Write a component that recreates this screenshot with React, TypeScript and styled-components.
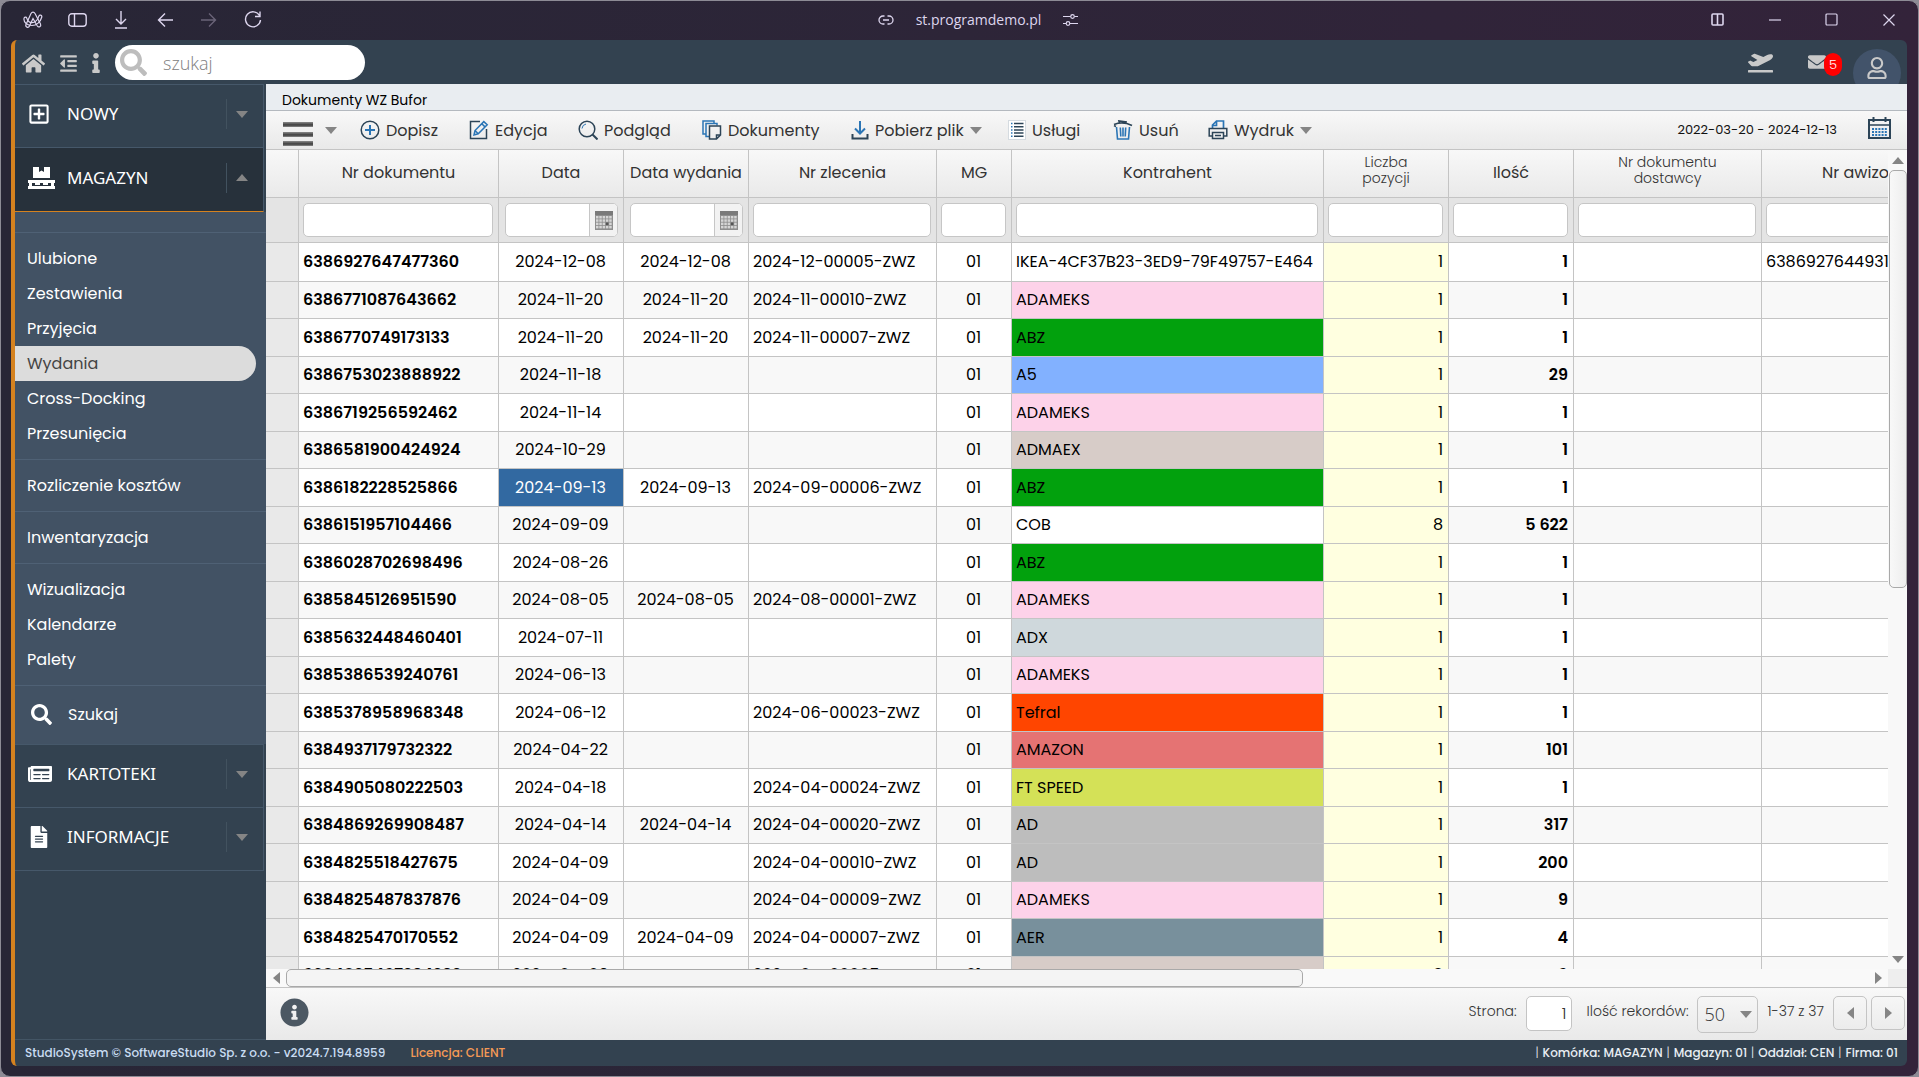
import React from "react";
import styled, { createGlobalStyle, css } from "styled-components";
import { FaHome, FaOutdent, FaInfo, FaInfoCircle, FaSearch, FaPlaneDeparture, FaEnvelope, FaRegUser, FaRegPlusSquare, FaNewspaper, FaFileAlt } from "react-icons/fa";

const UI = `Poppins, Inter, "Open Sans", sans-serif`;
const MENU = `"Noto Sans", "Open Sans", sans-serif`;
const SEGOE = `"Open Sans", "Noto Sans", sans-serif`;
const NAVY = "#2c4457";
const BLUE = "#2b75b5";
const LINE = "#c4c4c4";

const Global = createGlobalStyle`
  *, *::before, *::after { box-sizing: border-box; }
  html, body, #root { height: 100%; }
  body { margin: 0; overflow: hidden; background: #8d8b95; font-family: ${UI}; }
  button, input, select { font: inherit; color: inherit; }
  button { border: 0; padding: 0; background: none; cursor: pointer; }
  svg { display: block; flex: none; }
`;

const Window = styled.div`
  height: 100vh;
  padding: 0 11px 10px 10px;
  display: flex;
  flex-direction: column;
  border: 1px solid #8d8b95;
  border-radius: 10px;
  background: linear-gradient(to right, #282636, #2d2538 50%, #33233a);
`;

const TitleBar = styled.header`
  height: 39px;
  flex: none;
  display: flex;
  align-items: center;
  padding-bottom: 2px;
  color: #ddd6ee;
`;

const TitleGroup = styled.div<{ $end?: boolean }>`
  flex: ${p => (p.$end ? "1 1 0" : "1 1 50px")};
  display: flex;
  align-items: center;
  gap: ${p => (p.$end ? 44 : 0)}px;
  padding-right: ${p => (p.$end ? 12 : 0)}px;
  justify-content: ${p => (p.$end ? "flex-end" : "flex-start")};
`;

const TitleButton = styled.button<{ $w?: number }>`
  width: ${p => p.$w || 44}px;
  display: flex;
  justify-content: center;
`;

const Address = styled.div`
  display: flex;
  align-items: center;
  gap: 22px;
  font: 14px/20px ${SEGOE};
`;

const Shell = styled.div`
  flex: 1;
  min-height: 0;
  display: flex;
  flex-direction: column;
  overflow: hidden;
  border-left: 4px solid #d5821f;
  border-radius: 6px;
  background: #334250;
`;

const TopBar = styled.div`
  height: 44px;
  flex: none;
  display: flex;
  align-items: center;
  padding-left: 7px;
  color: #c9c9c9;
  overflow: hidden;
`;

const TopButton = styled.button<{ $w: number }>`
  width: ${p => p.$w}px;
  display: flex;
  margin-top: 2px;
`;

const Search = styled.label`
  width: 250px;
  height: 35px;
  padding: 0 5px;
  display: flex;
  align-items: center;
  gap: 16px;
  border-radius: 18px;
  background: #fff;
  color: #bdbdbd;
`;

const SearchInput = styled.input`
  flex: 1;
  min-width: 0;
  border: 0;
  outline: 0;
  padding: 2px 0 0;
  background: transparent;
  font: 300 18px/28px ${SEGOE};
  color: #444;
  &::placeholder { color: #808080; opacity: 1; }
`;

const TopRight = styled.div`
  margin-left: auto;
  display: flex;
  align-items: center;
`;

const Mail = styled.button`
  width: 60px;
  margin-left: 35px;
  display: flex;
  align-items: center;
`;

const Badge = styled.span`
  width: 18px;
  height: 23px;
  margin: 4px 0 0 -2px;
  border-radius: 9px;
  background: #f00;
  color: #fff;
  font-weight: 300;
  font-size: 13px;
  line-height: 24px;
`;

const Avatar = styled.button`
  width: 48px;
  height: 48px;
  margin: 22px 6px 0 -15px;
  padding-top: 8px;
  display: flex;
  align-items: flex-start;
  justify-content: center;
  border-radius: 24px;
  background: #42536a;
`;

const Body = styled.div`
  flex: 1;
  min-height: 0;
  display: flex;
`;

const Sidebar = styled.nav`
  width: 251px;
  flex: none;
  border-bottom: 1px solid #435565;
`;

const Section = styled.button<{ $open?: boolean }>`
  width: 249px;
  height: 63px;
  display: flex;
  align-items: center;
  padding: 0 15px 4px 13px;
  border: 0 solid #46586a;
  border-width: 1px 1px 0 0;
  color: #fff;
  font: 17px/24px ${MENU};
  text-align: left;
  ${p => p.$open && css`
    height: 65px;
    background: #27313b;
    border-bottom: 1px solid #d5821f;
  `}
`;

const SectionIcon = styled.span`
  width: 39px;
  display: flex;
`;

const SectionArrow = styled.span`
  margin-left: auto;
  height: 30px;
  padding-left: 9px;
  display: flex;
  align-items: center;
  border-left: 1px solid #42525f;
`;

const Submenu = styled.div`
  padding-top: 20px;
  background: #425264;
`;

const Group = styled.div`
  padding: 8px 0;
  border-top: 1px solid #4f6175;
`;

const MenuLink = styled.a<{ $active?: boolean }>`
  display: block;
  width: 241px;
  padding-left: 12px;
  font-size: 16px;
  line-height: 35px;
  color: #fff;
  text-decoration: none;
  border-radius: 0 18px 18px 0;
  ${p => p.$active && css`
    background: #dcdcdc;
    color: #444;
  `}
`;

const SearchLink = styled.a`
  display: flex;
  align-items: center;
  gap: 16px;
  height: 59px;
  padding: 0 0 2px 16px;
  border-top: 1px solid #4f6175;
  font-size: 16px;
  color: #fff;
  text-decoration: none;
`;

const SidebarEnd = styled.div`
  width: 249px;
  border-top: 1px solid #46586a;
`;

const Main = styled.main`
  flex: 1;
  min-width: 0;
  display: flex;
  flex-direction: column;
  background: #f7f7f7;
  color: #333;
`;

const PageTitle = styled.h1`
  margin: 0;
  height: 27px;
  flex: none;
  padding-left: 16px;
  border-bottom: 1px solid #b4b9bf;
  background: #e9edf1;
  color: #000;
  font-size: 14px;
  font-weight: 400;
  line-height: 32px;
`;

const Toolbar = styled.div`
  height: 39px;
  flex: none;
  display: flex;
  align-items: center;
  padding: 0 16px 0 17px;
  border-bottom: 1px solid ${LINE};
  background: linear-gradient(#f8f8f8, #e9e9e9);
  font-size: 16px;
`;

const ToolButton = styled.button<{ $w: number }>`
  width: ${p => p.$w}px;
  display: flex;
  align-items: center;
  gap: 6px;
  white-space: nowrap;
`;

const Burger = styled.span`
  width: 30px;
  height: 24px;
  margin: 8px 6px 0 0;
  display: flex;
  flex-direction: column;
  justify-content: space-between;
  &::before, &::after, & > i {
    content: "";
    height: 5px;
    background: linear-gradient(#8a8a8a, #3c3c3c 60%, #8a8a8a);
  }
`;

const DateRange = styled.span`
  margin-left: auto;
  padding-right: 31px;
  color: #111;
  font-size: 13px;
`;

const DateButton = styled.button`
  padding-bottom: 4px;
`;

const GridArea = styled.div`
  flex: 1;
  min-height: 0;
  display: flex;
`;

const Viewport = styled.div`
  flex: 1;
  min-width: 0;
  overflow: hidden;
`;

const Table = styled.table`
  width: 1684px;
  table-layout: fixed;
  border-collapse: separate;
  border-spacing: 0;
  font-size: 16px;
  color: #000;
  th, td { padding: 0; border: 0 solid ${LINE}; border-width: 0 1px 1px 0; white-space: nowrap; overflow: hidden; }
`;

const HeadRow = styled.tr`
  height: 48px;
  background: linear-gradient(#f8f8f8, #e9e9e9);
`;

const HeadCell = styled.th<{ $small?: boolean }>`
  && { white-space: normal; padding-bottom: ${p => (p.$small ? 8 : 2)}px; }
  color: #333;
  font-weight: ${p => (p.$small ? 300 : 400)};
  font-size: ${p => (p.$small ? 14 : 16)}px;
  line-height: 16px;
`;

const FilterRow = styled.tr`
  height: 45px;
  background: #e4e4e4;
`;

const FilterCell = styled.td`
  && { padding: 0 5px 0 4px; }
`;

const FilterBox = styled.div<{ $date?: boolean }>`
  height: 34px;
  margin-left: ${p => (p.$date ? 2 : 0)}px;
  display: flex;
  border: 1px solid #c6c6c6;
  border-radius: 5px;
  background: #fff;
  overflow: hidden;
`;

const FilterInput = styled.input`
  flex: 1;
  width: 0;
  border: 0;
  outline: 0;
  padding: 0 4px;
  background: transparent;
`;

const FilterButton = styled.button`
  width: 28px;
  display: flex;
  align-items: center;
  justify-content: center;
  border-left: 1px solid #c6c6c6;
  background: #f2f2f2;
`;

const Row = styled.tr`
  height: 38px;
  background: #fff;
  &:nth-child(even) { height: 37px; background: #f8f8f8; }
  &:first-child { height: 39px; }
`;

const Cell = styled.td<{ $align?: string; $bold?: boolean; $bg?: string; $selected?: boolean }>`
  && { padding: 0 5px 0 4px; }
  text-align: ${p => p.$align || "left"};
  font-weight: ${p => (p.$bold ? 600 : 400)};
  line-height: 24px;
  ${p => p.$bg && css`background: ${p.$bg};`}
  ${p => p.$selected && css`background: #3269a1; color: #fff;`}
`;

const VScroll = styled.div`
  width: 19px;
  flex: none;
  display: flex;
  flex-direction: column;
  align-items: center;
  background: #f8f8f8;
`;

const VThumb = styled.div`
  flex: 0 0 51%;
  width: 18px;
  border: 1px solid #a9a9a9;
  border-radius: 5px;
  background: linear-gradient(to right, #f8f8f8, #ededed);
`;

const VSlot = styled.span<{ $end?: boolean }>`
  margin-top: ${p => (p.$end ? "auto" : 0)};
  height: 20px;
  display: flex;
  align-items: center;
`;

const HScroll = styled.div`
  height: 19px;
  flex: none;
  display: flex;
  align-items: center;
  background: #f9f9f9;
  border-bottom: 1px solid ${LINE};
`;

const HThumb = styled.div`
  flex: 0 0 62%;
  height: 18px;
  border: 1px solid #a9a9a9;
  border-radius: 5px;
  background: #f4f4f4;
`;

const HSlot = styled.span<{ $end?: boolean }>`
  width: 20px;
  margin-left: ${p => (p.$end ? "auto" : 0)};
  display: flex;
  justify-content: center;
`;

const Corner = styled.span`
  width: 19px;
  height: 18px;
  background: #eee;
`;

const Pager = styled.div`
  height: 52px;
  flex: none;
  display: flex;
  align-items: flex-start;
  padding: 8px 2px 0 14px;
  background: linear-gradient(#f8f8f8, #e9e9e9);
  font-weight: 300;
  font-size: 14px;
  line-height: 30px;
`;

const InfoButton = styled.button`
  margin: 2px auto 0 0;
  color: #4c5863;
`;

const PageLabel = styled.label`
  display: flex;
  gap: 9px;
  margin-right: 15px;
`;

const PageInput = styled.input`
  width: 46px;
  height: 35px;
  padding: 0 4px;
  border: 1px solid ${LINE};
  border-radius: 5px;
  background: #fff;
  text-align: right;
  font-size: 16px;
`;

const SizeLabel = styled(PageLabel)`
  margin-right: 9px;
`;

const SelectWrap = styled.span`
  width: 61px;
  height: 37px;
  display: flex;
  align-items: center;
  padding-right: 5px;
  border: 1px solid ${LINE};
  border-radius: 5px;
  background: linear-gradient(#f6f6f6, #eaeaea);
`;

const PageSelect = styled.select`
  appearance: none;
  flex: 1;
  width: 0;
  border: 0;
  outline: 0;
  padding: 0 0 2px 6px;
  background: transparent;
  font: 300 18px/30px ${SEGOE};
`;

const PageButton = styled.button`
  width: 34px;
  height: 34px;
  margin-left: 4px;
  display: flex;
  align-items: center;
  justify-content: center;
  border: 1px solid ${LINE};
  border-radius: 5px;
  background: linear-gradient(#f6f6f6, #ececec);
`;

const Range = styled.span`
  margin-right: 5px;
`;

const StatusBar = styled.footer`
  height: 26px;
  flex: none;
  display: flex;
  align-items: center;
  padding: 0 9px 0 10px;
  color: #c9dcf2;
  font-weight: 500;
  font-size: 12px;
`;

const License = styled.span`
  margin-left: 25px;
  color: #f59a56;
`;

const Context = styled.span`
  margin-left: auto;
  display: flex;
  gap: 4px;
  color: #e9eef4;
  i { font-style: normal; font-weight: 300; }
`;

const Tri = ({ dir = "down", w = 12, color = "#858585" }: { dir?: string; w?: number; color?: string }) => {
  const h = Math.round(w * 0.58);
  const pts: Record<string, string> = {
    down: `0,0 ${w},0 ${w / 2},${h}`,
    up: `0,${h} ${w},${h} ${w / 2},0`,
    left: `${h},0 ${h},${w} 0,${w / 2}`,
    right: `0,0 0,${w} ${h},${w / 2}`,
  };
  const flat = dir === "down" || dir === "up";
  return <svg width={flat ? w : h} height={flat ? h : w} fill={color} aria-hidden="true"><polygon points={pts[dir]} /></svg>;
};

const Draw = ({ w = 20, h = 20, sw = 1.5, children }: { w?: number; h?: number; sw?: number; children: React.ReactNode }) => (
  <svg width={w} height={h} viewBox={`0 0 ${w} ${h}`} fill="none" stroke="currentColor" strokeWidth={sw} aria-hidden="true">{children}</svg>
);

const ToolIcon = ({ name }: { name: string }) => {
  switch (name) {
    case "add":
      return <Draw><circle cx="10" cy="10" r="8.8" stroke={NAVY} /><path d="M10 5v10M5 10h10" stroke={BLUE} strokeWidth="2" /></Draw>;
    case "edit":
      return <Draw><path d="M11 1.5H1.5v17h16V9" stroke={NAVY} /><path d="M5 15l1-4.5L14.8 1.6l3.4 3.2-9 9zM6 10.5l3.2 3.3M12.8 3.7l3.2 3.2" stroke={BLUE} /></Draw>;
    case "view":
      return <Draw><circle cx="9" cy="9" r="7.8" stroke={NAVY} /><path d="M14.5 14.5l5 5" stroke={NAVY} strokeWidth="2" /><path d="M4 8.5A5 5 0 0 1 8 4" stroke={BLUE} strokeWidth="1" /></Draw>;
    case "docs":
      return <Draw><path d="M4 14H1V1h11v2M7 16.5H4v-13h11v2" stroke={BLUE} /><path d="M7.5 6h11v9l-4 4h-7zM18.500 15h-4v4" stroke={NAVY} /></Draw>;
    case "download":
      return <Draw w={18}><path d="M9 1v12.5M4 8.5l5 5 5-5" stroke={BLUE} strokeWidth="2" /><path d="M1.5 14v4.5h15V14" stroke={NAVY} strokeWidth="2" /></Draw>;
    case "list":
      return <Draw w={18}><rect x=".5" y=".5" width="17" height="19" fill="#fff" stroke="#d5dbe0" strokeWidth="1" /><path d="M3 3.5h1.5M3 6.7h1.5M3 9.9h1.5M3 13.1h1.5M3 16.3h1.5" stroke={BLUE} /><path d="M6 3.5h9.5M6 6.7h9.5M6 9.9h9.5M6 13.1h9.5M6 16.3h9.5" stroke={NAVY} /></Draw>;
    case "trash":
      return <Draw><path d="M1 4.5c5-2 12-2 18 1M6.5 3L6 1l7 1-.5 1.500M3 6.500l-2-1" stroke={NAVY} strokeWidth="1.7" /><path d="M3.500 7l1 12h11l1-12M7.3 7.5l.5 9M10 7.500v9M12.7 7.5l-.5 9" stroke={BLUE} strokeWidth="1.6" /></Draw>;
    case "print":
      return <Draw><path d="M4.500 8.500V5l4-4h7v7.500M4.500 5.500h4V1" stroke={BLUE} strokeWidth="1.7" /><path d="M4.500 16H1.2V8.500h17.6V16h-3.3M4.500 12.500h11v6h-11zM7 15.500h6" stroke={NAVY} /></Draw>;
    default:
      return null;
  }
};

const PalletIcon = () => (
  <svg width="28" height="22" viewBox="0 0 28 22" fill="#fff" aria-hidden="true">
    <path d="M5 0h6v5l2.5-1.5L16 5V0h6v11H5z" /><path d="M0 13h27v3H0zM0 19h27v3H0z" /><path d="M1 16h3v3H1zM7 16h5v2H7zM15 16h5v2h-5zM23 16h3v3h-3z" />
  </svg>
);

const FilterCalendar = () => (
  <svg width="18" height="19" aria-hidden="true">
    <rect width="18" height="19" fill="#8e8e8e" /><rect width="18" height="4" fill="#7a7a7a" />
    {[0, 1, 2, 3].map(r => [0, 1, 2, 3, 4].map(c => <rect key={`${r}${c}`} x={1 + c * 3.3} y={5 + r * 3.3} width="2.5" height="2.5" fill={r === 2 && c === 3 ? "#555" : "#d6d6d6"} />))}
  </svg>
);

const CalendarIcon = () => (
  <Draw w={23} h={22} sw={2}>
    <path d="M1 3h21v18H1zM5.5 0v5M17.5 0v5" stroke={NAVY} /><path d="M2 8h19" stroke={NAVY} strokeWidth="1.5" />
    <path d="M4 12h15M4 15h15M4 18h15" stroke={BLUE} strokeDasharray="2 1.2" />
  </Draw>
);

const tools = [
  { id: "add", label: "Dopisz", w: 109 },
  { id: "edit", label: "Edycja", w: 109 },
  { id: "view", label: "Podgląd", w: 124 },
  { id: "docs", label: "Dokumenty", w: 149 },
  { id: "download", label: "Pobierz plik", w: 157, arrow: true },
  { id: "list", label: "Usługi", w: 105 },
  { id: "trash", label: "Usuń", w: 95 },
  { id: "print", label: "Wydruk", w: 110, arrow: true },
];

const columns = [
  { label: "", w: 33 },
  { label: "Nr dokumentu", w: 200 },
  { label: "Data", w: 125, date: true },
  { label: "Data wydania", w: 125, date: true },
  { label: "Nr zlecenia", w: 188 },
  { label: "MG", w: 75 },
  { label: "Kontrahent", w: 312 },
  { label: "Liczba pozycji", w: 125, small: true, lines: ["Liczba", "pozycji"] },
  { label: "Ilość", w: 125 },
  { label: "Nr dokumentu dostawcy", w: 188, small: true, lines: ["Nr dokumentu", "dostawcy"] },
  { label: "Nr awizo", w: 188 },
];

const colors: Record<string, string> = {
  ADAMEKS: "#fdd2e9", ABZ: "#02a10d", A5: "#82b1ff", ADMAEX: "#d7ccc8", COB: "#fff", ADX: "#cfd8dc",
  Tefral: "#ff4500", AMAZON: "#e57373", "FT SPEED": "#d4e157", AD: "#bdbdbd", AER: "#78909c",
};

// number, date, issue date, order, client, positions, quantity, notice
const rows: string[][] = [
  ["6386927647477360", "2024-12-08", "2024-12-08", "2024-12-00005-ZWZ", "IKEA-4CF37B23-3ED9-79F49757-E464", "1", "1", "6386927644931"],
  ["6386771087643662", "2024-11-20", "2024-11-20", "2024-11-00010-ZWZ", "ADAMEKS", "1", "1"],
  ["6386770749173133", "2024-11-20", "2024-11-20", "2024-11-00007-ZWZ", "ABZ", "1", "1"],
  ["6386753023888922", "2024-11-18", "", "", "A5", "1", "29"],
  ["6386719256592462", "2024-11-14", "", "", "ADAMEKS", "1", "1"],
  ["6386581900424924", "2024-10-29", "", "", "ADMAEX", "1", "1"],
  ["6386182228525866", "2024-09-13", "2024-09-13", "2024-09-00006-ZWZ", "ABZ", "1", "1"],
  ["6386151957104466", "2024-09-09", "", "", "COB", "8", "5 622"],
  ["6386028702698496", "2024-08-26", "", "", "ABZ", "1", "1"],
  ["6385845126951590", "2024-08-05", "2024-08-05", "2024-08-00001-ZWZ", "ADAMEKS", "1", "1"],
  ["6385632448460401", "2024-07-11", "", "", "ADX", "1", "1"],
  ["6385386539240761", "2024-06-13", "", "", "ADAMEKS", "1", "1"],
  ["6385378958968348", "2024-06-12", "", "2024-06-00023-ZWZ", "Tefral", "1", "1"],
  ["6384937179732322", "2024-04-22", "", "", "AMAZON", "1", "101"],
  ["6384905080222503", "2024-04-18", "", "2024-04-00024-ZWZ", "FT SPEED", "1", "1"],
  ["6384869269908487", "2024-04-14", "2024-04-14", "2024-04-00020-ZWZ", "AD", "1", "317"],
  ["6384825518427675", "2024-04-09", "", "2024-04-00010-ZWZ", "AD", "1", "200"],
  ["6384825487837876", "2024-04-09", "", "2024-04-00009-ZWZ", "ADAMEKS", "1", "9"],
  ["6384825470170552", "2024-04-09", "2024-04-09", "2024-04-00007-ZWZ", "AER", "1", "4"],
  ["6384825467294292", "2024-04-09", "", "2024-04-00005-ZWZ", "ADMAEX", "8", "6"],
];

const menu = [
  ["Ulubione", "Zestawienia", "Przyjęcia", "Wydania", "Cross-Docking", "Przesunięcia"],
  ["Rozliczenie kosztów"],
  ["Inwentaryzacja"],
  ["Wizualizacja", "Kalendarze", "Palety"],
];

const MenuSection = ({ icon, label, open }: { icon: React.ReactNode; label: string; open?: boolean }) => (
  <Section $open={open} aria-expanded={!!open}>
    <SectionIcon>{icon}</SectionIcon>
    {label}
    <SectionArrow><Tri dir={open ? "up" : "down"} /></SectionArrow>
  </Section>
);

const BrowserBar = () => (
  <TitleBar>
    <TitleGroup>
      <TitleButton aria-label="Arc">
        <Draw w={20} h={18} sw={1.2}>
          <path d="M8 2.500c1-1.800 3-1.800 4 0l5.500 10.500c1 2.500-1.800 4-3.200 2L10 7.500 6.500 15c-1.200 2.500-4.500 1-3.500-1.500z" />
          <path d="M1 7.500c-.6 4 3.500 7 8 7s8.500-3.500 9.800-8.500c.4-2-2.300-2.600-3-.8-1.200 4-3.800 6.500-6.800 6.500-2.500 0-4.500-1.500-5.200-4.500-.5-1.600-2.600-1.300-2.800.3z" />
        </Draw>
      </TitleButton>
      <TitleButton aria-label="Sidebar"><Draw w={19} h={14} sw={1.4}><rect x=".8" y=".8" width="17.400" height="12.400" rx="3" /><path d="M6.500 1v12" /></Draw></TitleButton>
      <TitleButton aria-label="Downloads"><Draw w={14} h={18} sw={1.4}><path d="M7 0v13M2 8l5 5 5-5M1 17h12" /></Draw></TitleButton>
      <TitleButton aria-label="Back"><Draw w={16} h={14} sw={1.4}><path d="M16 7H1.500M8 .5L1.500 7 8 13.500" /></Draw></TitleButton>
      <TitleButton aria-label="Forward" disabled><Draw w={16} h={14} sw={1.4}><path d="M0 7h14.500M8 .5L14.500 7 8 13.500" stroke="#6a6478" /></Draw></TitleButton>
      <TitleButton aria-label="Reload"><Draw w={18} h={18} sw={1.4}><path d="M15.500 4.500A7.500 7.500 0 1 0 16.500 9M16 .5v5h-5" /></Draw></TitleButton>
    </TitleGroup>
    <Address>
      <Draw w={16} h={10} sw={1.3}><path d="M6.500 1H5a4 4 0 0 0 0 8h1.500M9.500 1H11a4 4 0 0 1 0 8H9.500M5 5h6" /></Draw>
      <span>st.programdemo.pl</span>
      <Draw w={15} h={12} sw={1.2}><path d="M0 2.500h7.500M11.500 2.500H15M0 9.500h3M7 9.500h8" /><circle cx="9.500" cy="2.500" r="1.800" /><circle cx="5" cy="9.500" r="1.800" /></Draw>
    </Address>
    <TitleGroup $end>
      <TitleButton $w={13} aria-label="Split view"><Draw w={13} h={13} sw={1.6}><rect x="1" y="1" width="11" height="11" rx="1" /><path d="M6.500 1v11" /></Draw></TitleButton>
      <TitleButton $w={13} aria-label="Minimize"><Draw w={12} h={12} sw={1.2}><path d="M0 6h12" /></Draw></TitleButton>
      <TitleButton $w={13} aria-label="Maximize"><Draw w={13} h={13} sw={1.2}><rect x="1" y="1" width="11" height="11" rx="1" /></Draw></TitleButton>
      <TitleButton $w={13} aria-label="Close"><Draw w={12} h={12} sw={1.2}><path d="M.5.5l11 11M11.500.5l-11 11" /></Draw></TitleButton>
    </TitleGroup>
  </TitleBar>
);

export default function App() {
  return (
    <>
      <Global />
      <Window>
        <BrowserBar />
        <Shell>
          <TopBar>
            <TopButton $w={37} aria-label="Start"><FaHome size={23} /></TopButton>
            <TopButton $w={27} aria-label="Zwiń menu"><FaOutdent size={19} /></TopButton>
            <TopButton $w={29} aria-label="Informacje"><FaInfo size={20} /></TopButton>
            <Search>
              <FaSearch size={27} />
              <SearchInput placeholder="szukaj" aria-label="szukaj" />
            </Search>
            <TopRight>
              <FaPlaneDeparture size={25} />
              <Mail aria-label="Wiadomości"><FaEnvelope size={18} /><Badge>5</Badge></Mail>
              <Avatar aria-label="Konto"><FaRegUser size={22} /></Avatar>
            </TopRight>
          </TopBar>
          <Body>
            <Sidebar>
              <MenuSection icon={<FaRegPlusSquare size={22} />} label="NOWY" />
              <MenuSection icon={<PalletIcon />} label="MAGAZYN" open />
              <Submenu>
                {menu.map(group => (
                  <Group key={group[0]}>
                    {group.map(item => <MenuLink key={item} href="#" $active={item === "Wydania"}>{item}</MenuLink>)}
                  </Group>
                ))}
                <SearchLink href="#"><FaSearch size={21} />Szukaj</SearchLink>
              </Submenu>
              <MenuSection icon={<FaNewspaper size={24} />} label="KARTOTEKI" />
              <MenuSection icon={<FaFileAlt size={22} />} label="INFORMACJE" />
              <SidebarEnd />
            </Sidebar>
            <Main>
              <PageTitle>Dokumenty WZ Bufor</PageTitle>
              <Toolbar>
                <ToolButton $w={77} aria-label="Menu"><Burger><i /></Burger><Tri /></ToolButton>
                {tools.map(t => (
                  <ToolButton key={t.id} $w={t.w}>
                    <ToolIcon name={t.id} />{t.label}{t.arrow && <Tri />}
                  </ToolButton>
                ))}
                <DateRange>2022-03-20 - 2024-12-13</DateRange>
                <DateButton aria-label="Zakres dat"><CalendarIcon /></DateButton>
              </Toolbar>
              <GridArea>
                <Viewport>
                  <Table>
                    <colgroup>{columns.map((c, i) => <col key={i} width={c.w} />)}</colgroup>
                    <thead>
                      <HeadRow>
                        {columns.map((c, i) => (
                          <HeadCell key={i} $small={c.small}>{c.lines ? <>{c.lines[0]}<br />{c.lines[1]}</> : c.label}</HeadCell>
                        ))}
                      </HeadRow>
                      <FilterRow>
                        {columns.map((c, i) => (
                          <FilterCell key={i}>
                            {c.label && (
                              <FilterBox $date={c.date}>
                                <FilterInput aria-label={c.label} />
                                {c.date && <FilterButton aria-label="Kalendarz"><FilterCalendar /></FilterButton>}
                              </FilterBox>
                            )}
                          </FilterCell>
                        ))}
                      </FilterRow>
                    </thead>
                    <tbody>
                      {rows.map((r, i) => (
                        <Row key={r[0]}>
                          <Cell $bg="#e9e9e9" />
                          <Cell $bold>{r[0]}</Cell>
                          <Cell $align="center" $selected={i === 6}>{r[1]}</Cell>
                          <Cell $align="center">{r[2]}</Cell>
                          <Cell>{r[3]}</Cell>
                          <Cell $align="center">01</Cell>
                          <Cell $bg={colors[r[4]]}>{r[4]}</Cell>
                          <Cell $align="right" $bg="#ffffe0">{r[5]}</Cell>
                          <Cell $align="right" $bold>{r[6]}</Cell>
                          <Cell />
                          <Cell>{r[7]}</Cell>
                        </Row>
                      ))}
                    </tbody>
                  </Table>
                </Viewport>
                <VScroll>
                  <VSlot><Tri dir="up" /></VSlot>
                  <VThumb />
                  <VSlot $end><Tri /></VSlot>
                </VScroll>
              </GridArea>
              <HScroll>
                <HSlot><Tri dir="left" /></HSlot>
                <HThumb />
                <HSlot $end><Tri dir="right" /></HSlot>
                <Corner />
              </HScroll>
              <Pager>
                <InfoButton aria-label="Informacja"><FaInfoCircle size={29} /></InfoButton>
                <PageLabel>Strona:<PageInput defaultValue="1" /></PageLabel>
                <SizeLabel>Ilość rekordów:
                  <SelectWrap><PageSelect defaultValue="50"><option>50</option></PageSelect><Tri /></SelectWrap>
                </SizeLabel>
                <Range>1-37 z 37</Range>
                <PageButton aria-label="Poprzednia"><Tri dir="left" /></PageButton>
                <PageButton aria-label="Następna"><Tri dir="right" /></PageButton>
              </Pager>
            </Main>
          </Body>
          <StatusBar>
            <span>StudioSystem © SoftwareStudio Sp. z o.o. - v2024.7.194.8959</span>
            <License>Licencja: CLIENT</License>
            <Context>
              <i>|</i>Komórka: MAGAZYN<i>|</i>Magazyn: 01<i>|</i>Oddział: CEN<i>|</i>Firma: 01
            </Context>
          </StatusBar>
        </Shell>
      </Window>
    </>
  );
}
